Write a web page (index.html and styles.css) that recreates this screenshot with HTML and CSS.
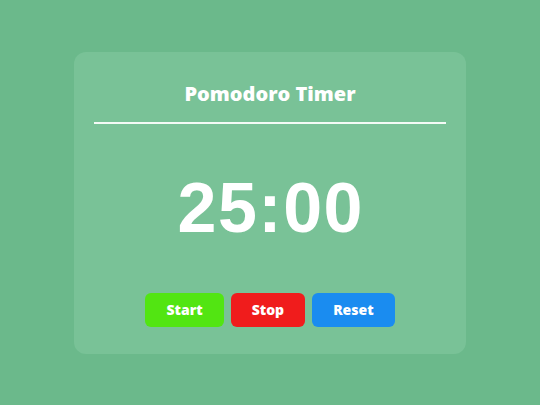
FILE: index.html
```html
<!DOCTYPE html>
<html>
<head>
<meta charset="utf-8">
<link rel="stylesheet" href="styles.css">
</head>
<body>
<div class="card">
  <h1 class="title">Pomodoro Timer</h1>
  <div class="rule"></div>
  <div class="time">25:00</div>
  <div class="buttons">
    <button class="btn start">Start</button>
    <button class="btn stop">Stop</button>
    <button class="btn reset">Reset</button>
  </div>
</div>
</body>
</html>
```
FILE: styles.css
```css
html, body {
  margin: 0;
  height: 100%;
}
body {
  background: #6bb98b;
  display: flex;
  align-items: center;
  justify-content: center;
  font-family: "Open Sans", "Liberation Sans", sans-serif;
  color: #fff;
}
.card {
  width: 392px;
  height: 302px;
  box-sizing: border-box;
  padding: 27px 20px 27px;
  background: #79c297;
  border-radius: 12px;
  display: flex;
  flex-direction: column;
  align-items: stretch;
}
.title {
  margin: 0;
  font-size: 20px;
  line-height: 30px;
  font-weight: 800;
  text-align: center;
}
.rule {
  margin-top: 13px;
  height: 2px;
  background: #f4fbf6;
}
.time {
  margin-top: 49px;
  font-family: "Liberation Sans", Arial, sans-serif;
  font-size: 70px;
  line-height: 70px;
  font-weight: 700;
  letter-spacing: 1.5px;
  text-indent: 1.5px;
  text-align: center;
}
.buttons {
  margin-top: 50px;
  display: flex;
  justify-content: center;
  gap: 7px;
}
.btn {
  height: 34px;
  padding: 0 21px;
  border: none;
  border-radius: 6px;
  font-family: "Open Sans", "Liberation Sans", sans-serif;
  font-size: 14px;
  font-weight: 800;
  color: #fff;
}
.start { background: #52e512; }
.stop { background: #f01c1c; }
.reset { background: #1a8cf0; }
```
